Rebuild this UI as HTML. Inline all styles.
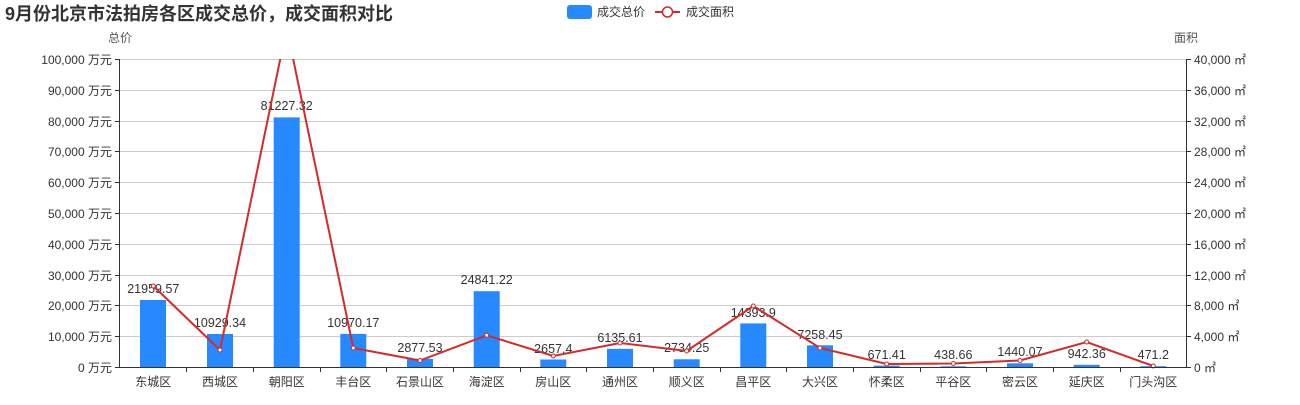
<!DOCTYPE html>
<html><head><meta charset="utf-8"><style>
body{margin:0;background:#fff;}
svg text{font-family:"Liberation Sans","Noto Sans CJK SC",sans-serif;}
</style></head><body>
<svg width="1300" height="400" xmlns="http://www.w3.org/2000/svg">
<defs><clipPath id="c"><rect x="119" y="59" width="1068" height="310"/></clipPath></defs>
<text x="5" y="20" font-size="18" font-weight="bold" fill="#333">9月份北京市法拍房各区成交总价，成交面积对比</text>
<rect x="567" y="5" width="25" height="14" rx="3" fill="#2689ff"/>
<text x="597" y="16" font-size="12" fill="#333">成交总价</text>
<line x1="655" y1="12" x2="680" y2="12" stroke="#d42a2a" stroke-width="2"/>
<circle cx="667.5" cy="12" r="5" fill="#fff" stroke="#d42a2a" stroke-width="1.5"/>
<text x="686" y="16" font-size="12" fill="#333">成交面积</text>
<text x="120" y="42" font-size="12" fill="#555" text-anchor="middle">总价</text>
<text x="1186" y="42" font-size="12" fill="#555" text-anchor="middle">面积</text>
<g stroke="#ccc" stroke-width="1">
<line x1="120" y1="59.5" x2="1186" y2="59.5"/><line x1="120" y1="90.5" x2="1186" y2="90.5"/><line x1="120" y1="121.5" x2="1186" y2="121.5"/><line x1="120" y1="151.5" x2="1186" y2="151.5"/><line x1="120" y1="182.5" x2="1186" y2="182.5"/><line x1="120" y1="213.5" x2="1186" y2="213.5"/><line x1="120" y1="244.5" x2="1186" y2="244.5"/><line x1="120" y1="275.5" x2="1186" y2="275.5"/><line x1="120" y1="305.5" x2="1186" y2="305.5"/><line x1="120" y1="336.5" x2="1186" y2="336.5"/>
</g>
<g fill="#2689ff">
<rect x="140" y="300" width="26" height="67.6"/><rect x="207" y="334" width="26" height="33.7"/><rect x="273.7" y="117.4" width="26" height="250.2"/><rect x="340.3" y="333.9" width="26" height="33.8"/><rect x="407" y="358.8" width="26" height="8.9"/><rect x="473.7" y="291.2" width="26" height="76.5"/><rect x="540.3" y="359.5" width="26" height="8.2"/><rect x="607" y="348.8" width="26" height="18.9"/><rect x="673.7" y="359.3" width="26" height="8.4"/><rect x="740.3" y="323.4" width="26" height="44.3"/><rect x="807" y="345.3" width="26" height="22.4"/><rect x="873.7" y="365.6" width="26" height="2.1"/><rect x="940.3" y="366.3" width="26" height="1.4"/><rect x="1007" y="363.3" width="26" height="4.4"/><rect x="1073.7" y="364.8" width="26" height="2.9"/><rect x="1140.3" y="366.2" width="26" height="1.5"/>
</g>
<g font-size="12.5" fill="#333" text-anchor="middle">
<text x="153.3" y="293">21959.57</text><text x="220" y="327">10929.34</text><text x="286.7" y="110">81227.32</text><text x="353.3" y="327">10970.17</text><text x="420" y="352">2877.53</text><text x="486.7" y="284">24841.22</text><text x="553.3" y="353">2657.4</text><text x="620" y="342">6135.61</text><text x="686.7" y="352">2734.25</text><text x="753.3" y="317">14393.9</text><text x="820" y="339">7258.45</text><text x="886.7" y="359">671.41</text><text x="953.3" y="359">438.66</text><text x="1020" y="356">1440.07</text><text x="1086.7" y="358">942.36</text><text x="1153.3" y="359">471.2</text>
</g>
<g clip-path="url(#c)">
<polyline fill="none" stroke="#d42a2a" stroke-width="2" points="153.3,286 220,350 286.7,28 353.3,348 420,360.5 486.7,335.3 553.3,356 620,343 686.7,351 753.3,306 820,348 886.7,364 953.3,363.5 1020,360.5 1086.7,342 1153.3,366"/>
<g fill="#fff" stroke="#d42a2a" stroke-width="1"><circle cx="153.3" cy="286" r="2"/><circle cx="220" cy="350" r="2"/><circle cx="353.3" cy="348" r="2"/><circle cx="420" cy="360.5" r="2"/><circle cx="486.7" cy="335.3" r="2"/><circle cx="553.3" cy="356" r="2"/><circle cx="620" cy="343" r="2"/><circle cx="686.7" cy="351" r="2"/><circle cx="753.3" cy="306" r="2"/><circle cx="820" cy="348" r="2"/><circle cx="886.7" cy="364" r="2"/><circle cx="953.3" cy="363.5" r="2"/><circle cx="1020" cy="360.5" r="2"/><circle cx="1086.7" cy="342" r="2"/><circle cx="1153.3" cy="366" r="2"/></g>
</g>
<g stroke="#333" stroke-width="1">
<line x1="119.5" y1="59" x2="119.5" y2="368"/><line x1="1186.5" y1="59" x2="1186.5" y2="368"/><line x1="115" y1="367.5" x2="1191" y2="367.5"/>
<line x1="115" y1="59.5" x2="120" y2="59.5"/><line x1="115" y1="90.5" x2="120" y2="90.5"/><line x1="115" y1="121.5" x2="120" y2="121.5"/><line x1="115" y1="151.5" x2="120" y2="151.5"/><line x1="115" y1="182.5" x2="120" y2="182.5"/><line x1="115" y1="213.5" x2="120" y2="213.5"/><line x1="115" y1="244.5" x2="120" y2="244.5"/><line x1="115" y1="275.5" x2="120" y2="275.5"/><line x1="115" y1="305.5" x2="120" y2="305.5"/><line x1="115" y1="336.5" x2="120" y2="336.5"/>
<line x1="1186" y1="59.5" x2="1191" y2="59.5"/><line x1="1186" y1="90.5" x2="1191" y2="90.5"/><line x1="1186" y1="121.5" x2="1191" y2="121.5"/><line x1="1186" y1="151.5" x2="1191" y2="151.5"/><line x1="1186" y1="182.5" x2="1191" y2="182.5"/><line x1="1186" y1="213.5" x2="1191" y2="213.5"/><line x1="1186" y1="244.5" x2="1191" y2="244.5"/><line x1="1186" y1="275.5" x2="1191" y2="275.5"/><line x1="1186" y1="305.5" x2="1191" y2="305.5"/><line x1="1186" y1="336.5" x2="1191" y2="336.5"/>
<line x1="186.5" y1="367" x2="186.5" y2="372"/><line x1="253.5" y1="367" x2="253.5" y2="372"/><line x1="320.5" y1="367" x2="320.5" y2="372"/><line x1="386.5" y1="367" x2="386.5" y2="372"/><line x1="453.5" y1="367" x2="453.5" y2="372"/><line x1="520.5" y1="367" x2="520.5" y2="372"/><line x1="586.5" y1="367" x2="586.5" y2="372"/><line x1="653.5" y1="367" x2="653.5" y2="372"/><line x1="720.5" y1="367" x2="720.5" y2="372"/><line x1="786.5" y1="367" x2="786.5" y2="372"/><line x1="853.5" y1="367" x2="853.5" y2="372"/><line x1="920.5" y1="367" x2="920.5" y2="372"/><line x1="986.5" y1="367" x2="986.5" y2="372"/><line x1="1053.5" y1="367" x2="1053.5" y2="372"/><line x1="1120.5" y1="367" x2="1120.5" y2="372"/>
</g>
<g font-size="12" fill="#333" text-anchor="end">
<text x="112" y="64">100,000 万元</text><text x="112" y="95">90,000 万元</text><text x="112" y="126">80,000 万元</text><text x="112" y="156">70,000 万元</text><text x="112" y="187">60,000 万元</text><text x="112" y="218">50,000 万元</text><text x="112" y="249">40,000 万元</text><text x="112" y="280">30,000 万元</text><text x="112" y="310">20,000 万元</text><text x="112" y="341">10,000 万元</text><text x="112" y="372">0 万元</text>
</g>
<g font-size="12" fill="#333">
<text x="1194" y="64">40,000 ㎡</text><text x="1194" y="95">36,000 ㎡</text><text x="1194" y="126">32,000 ㎡</text><text x="1194" y="156">28,000 ㎡</text><text x="1194" y="187">24,000 ㎡</text><text x="1194" y="218">20,000 ㎡</text><text x="1194" y="249">16,000 ㎡</text><text x="1194" y="280">12,000 ㎡</text><text x="1194" y="310">8,000 ㎡</text><text x="1194" y="341">4,000 ㎡</text><text x="1194" y="372">0 ㎡</text>
</g>
<g font-size="12" fill="#333" text-anchor="middle">
<text x="153.3" y="386">东城区</text><text x="220" y="386">西城区</text><text x="286.7" y="386">朝阳区</text><text x="353.3" y="386">丰台区</text><text x="420" y="386">石景山区</text><text x="486.7" y="386">海淀区</text><text x="553.3" y="386">房山区</text><text x="620" y="386">通州区</text><text x="686.7" y="386">顺义区</text><text x="753.3" y="386">昌平区</text><text x="820" y="386">大兴区</text><text x="886.7" y="386">怀柔区</text><text x="953.3" y="386">平谷区</text><text x="1020" y="386">密云区</text><text x="1086.7" y="386">延庆区</text><text x="1153.3" y="386">门头沟区</text>
</g>
</svg>
</body></html>
